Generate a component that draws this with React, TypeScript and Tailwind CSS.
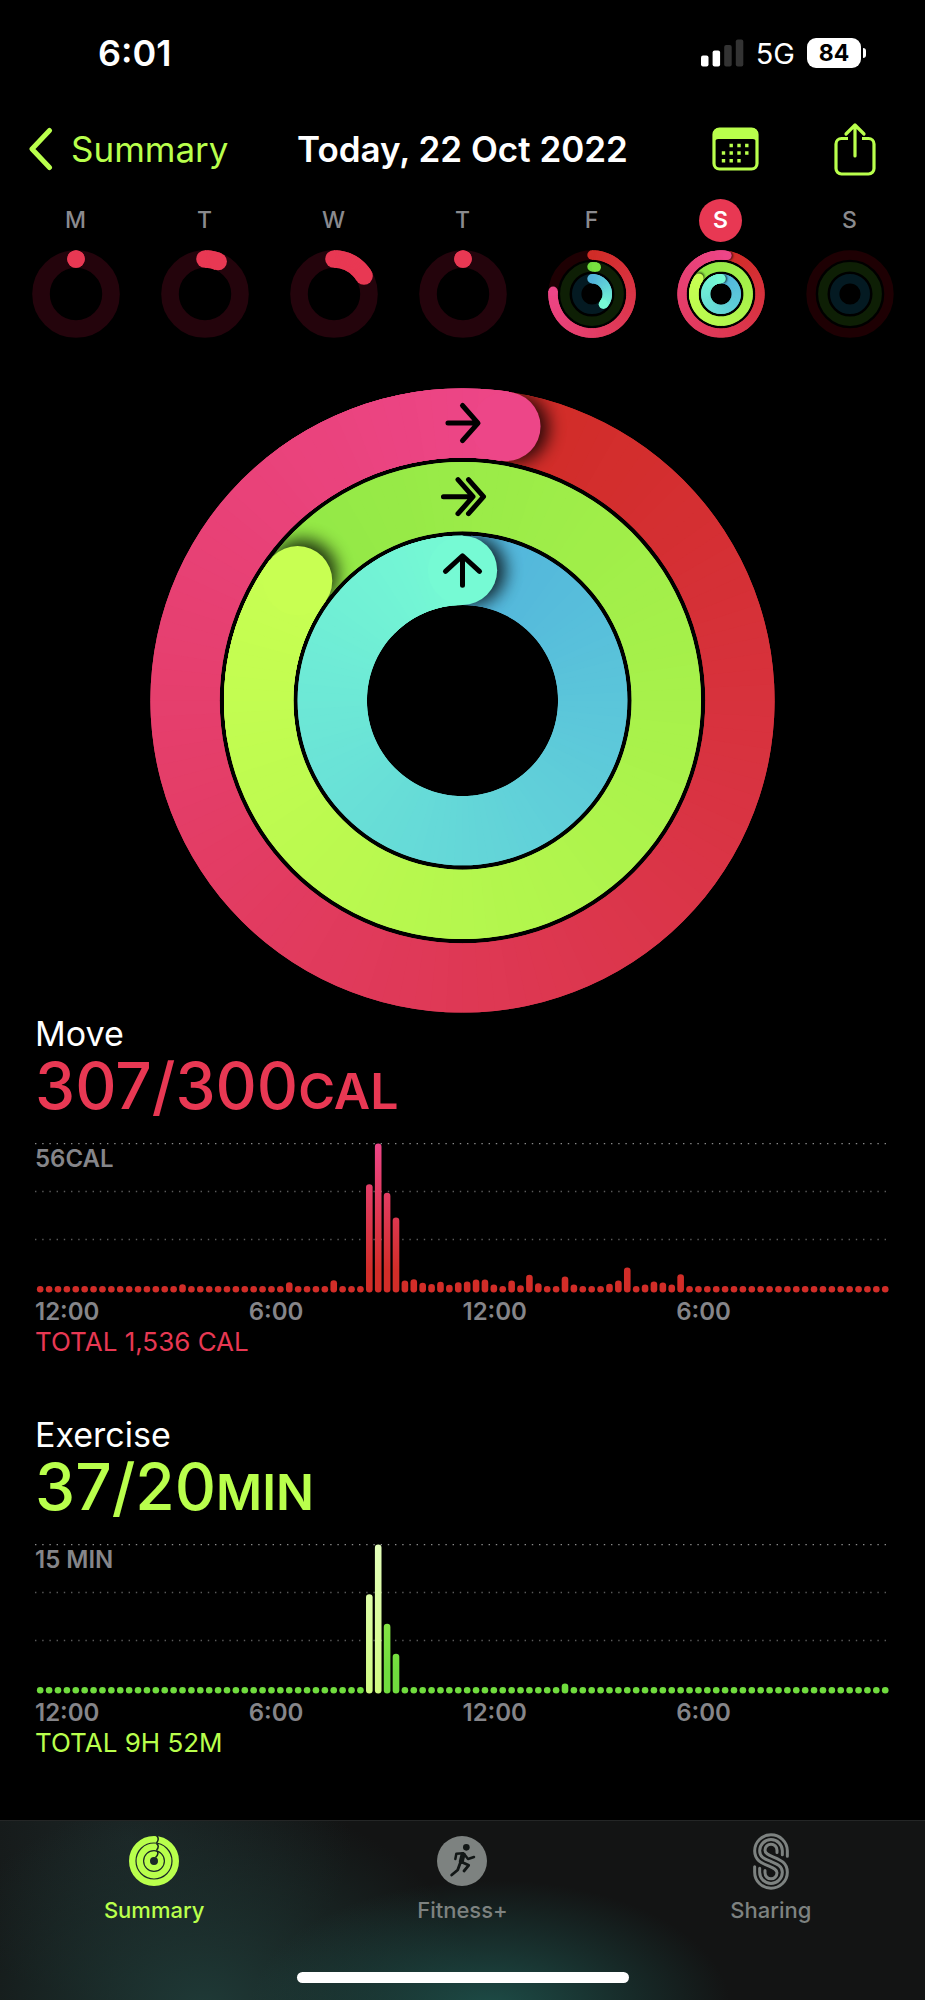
import type { ReactNode } from "react";

type Stop = [number, number, number];

interface RingSpec {
  id: string;
  radius: number;
  width: number;
  start: number;
  end: number;
  from: Stop;
  to: Stop;
  track?: string;
  shadow?: boolean;
}

const RED_FROM: Stop = [209, 44, 39];
const RED_TO: Stop = [237, 70, 136];
const GREEN_FROM: Stop = [146, 232, 70];
const GREEN_TO: Stop = [200, 255, 82];
const BLUE_FROM: Stop = [82, 180, 220];
const BLUE_TO: Stop = [118, 250, 212];
const PINK: Stop = [232, 56, 83];

function point(radius: number, angle: number) {
  const rad = ((angle - 90) * Math.PI) / 180;
  return [radius * Math.cos(rad), radius * Math.sin(rad)];
}

function arc(radius: number, a: number, b: number) {
  const [x1, y1] = point(radius, a);
  const [x2, y2] = point(radius, b);
  return `M${x1} ${y1}A${radius} ${radius} 0 0 1 ${x2} ${y2}`;
}

function mix(from: Stop, to: Stop, t: number) {
  const c = from.map((v, i) => Math.round(v + (to[i] - v) * t));
  return `rgb(${c[0]},${c[1]},${c[2]})`;
}

function donut(outer: number, inner: number) {
  const circle = (r: number) => `M${-r} 0A${r} ${r} 0 1 1 ${r} 0A${r} ${r} 0 1 1 ${-r} 0Z`;
  return circle(outer) + circle(inner);
}

function Ring({ id, radius, width, start, end, from, to, track, shadow }: RingSpec) {
  const span = end - start;
  const step = 3;
  // each segment runs on under the next one, so no seam shows between them
  const segments = [];
  for (let a = start; a < end; a += step) {
    segments.push({ a, b: Math.min(a + step * 2, end), color: mix(from, to, (a - start) / (span || 1)) });
  }
  const draw = (list: typeof segments) =>
    list.map((s) => <path key={s.a} d={arc(radius, s.a, s.b)} stroke={s.color} strokeWidth={width} fill="none" />);
  const [sx, sy] = point(radius, start);
  const [ex, ey] = point(radius, end);
  const [hx, hy] = point(radius, end + (width * 7) / radius);

  return (
    <g>
      {track && <circle r={radius} fill="none" stroke={track} strokeWidth={width} />}
      {!shadow && <circle cx={sx} cy={sy} r={width / 2} fill={mix(from, to, 0)} />}
      {draw(segments)}
      {shadow && (
        <>
          <clipPath id={`${id}-clip`}>
            <path d={donut(radius + width / 2, radius - width / 2)} clipRule="evenodd" />
          </clipPath>
          <filter id={`${id}-blur`} x="-50%" y="-50%" width="200%" height="200%">
            <feGaussianBlur stdDeviation={width / 8} />
          </filter>
          <g clipPath={`url(#${id}-clip)`}>
            <circle cx={hx} cy={hy} r={width / 2} fill="#000" opacity="0.8" filter={`url(#${id}-blur)`} />
          </g>
          {draw(segments.slice(-16))}
        </>
      )}
      <circle cx={ex} cy={ey} r={width / 2} fill={mix(from, to, 1)} />
    </g>
  );
}

function Track({ radius, width, color }: { radius: number; width: number; color: string }) {
  return <circle r={radius} fill="none" stroke={color} strokeWidth={width} />;
}

function MoveOnly({ id, end }: { id: string; end: number }) {
  return <Ring id={id} radius={35} width={17.6} start={0} end={end} from={PINK} to={PINK} track="#24040c" />;
}

const days: { label: string; name: string; active?: boolean; rings: ReactNode }[] = [
  { label: "M", name: "Monday", rings: <MoveOnly id="mon" end={0} /> },
  { label: "T", name: "Tuesday", rings: <MoveOnly id="tue" end={22} /> },
  { label: "W", name: "Wednesday", rings: <MoveOnly id="wed" end={59} /> },
  { label: "T", name: "Thursday", rings: <MoveOnly id="thu" end={0} /> },
  {
    label: "F",
    name: "Friday",
    rings: (
      <>
        <Ring id="fri-m" radius={39} width={9.4} start={0} end={274} from={RED_FROM} to={RED_TO} track="#1e0003" />
        <Ring id="fri-e" radius={27.2} width={9.4} start={0} end={9} from={[114, 220, 62]} to={[120, 224, 64]} track="#0e1f05" />
        <Ring id="fri-s" radius={15.3} width={9.4} start={0} end={132} from={BLUE_FROM} to={BLUE_TO} track="#041a22" />
      </>
    ),
  },
  {
    label: "S",
    name: "Saturday",
    active: true,
    rings: (
      <>
        <Ring id="sat-m" radius={39} width={9.2} start={9} end={369} from={RED_FROM} to={RED_TO} shadow />
        <Ring id="sat-e" radius={27.2} width={9.2} start={306} end={666} from={GREEN_FROM} to={GREEN_TO} shadow />
        <Ring id="sat-s" radius={15.3} width={9.2} start={0} end={361} from={BLUE_FROM} to={BLUE_TO} shadow />
      </>
    ),
  },
  {
    label: "S",
    name: "Sunday",
    rings: (
      <>
        <Track radius={39} width={9.4} color="#1e0003" />
        <Track radius={27.2} width={9.4} color="#0e1f05" />
        <Track radius={15.3} width={9.4} color="#041a22" />
      </>
    ),
  },
];

function StatusBar() {
  return (
    <div className="flex h-26 items-center justify-between pl-[98px] pr-[59px] pt-0.5 text-white">
      <span className="text-[36px] font-semibold leading-none">6:01</span>
      <div className="flex items-center gap-3">
        <svg width="43" height="28" viewBox="0 0 43 28" aria-hidden="true">
          <rect x="0" y="16.5" width="7.5" height="11" rx="2" fill="#fff" />
          <rect x="11.6" y="11.5" width="7.5" height="16" rx="2" fill="#fff" />
          <rect x="23.2" y="6" width="7.5" height="21.5" rx="2" fill="#333" />
          <rect x="34.8" y="0.5" width="7.5" height="27" rx="2" fill="#333" />
        </svg>
        <span className="text-[29px] leading-none">5G</span>
        <div className="flex items-center gap-0.5">
          <span className="flex h-[30px] w-[54px] items-center justify-center rounded-[9px] bg-white text-[23px] font-bold leading-none text-black">
            84
          </span>
          <span className="h-2.5 w-[3px] rounded-r-full bg-white" />
        </div>
      </div>
    </div>
  );
}

function Header() {
  return (
    <header className="grid h-[90px] grid-cols-[1fr_auto_1fr] items-center px-7">
      <a href="#summary" className="flex items-center gap-[18px] text-[35px] leading-none text-[#b9ff4c]">
        <svg width="25" height="44" viewBox="0 0 25 44" fill="none" aria-hidden="true">
          <path d="M21.500 3.500 4 22l17.500 18.500" stroke="currentColor" strokeWidth="5" strokeLinecap="round" strokeLinejoin="round" />
        </svg>
        Summary
      </a>
      <h1 className="whitespace-nowrap text-[35px] font-semibold leading-none text-white">Today, 22 Oct 2022</h1>
      <div className="flex items-center justify-end gap-[75px] pr-[21px] text-[#b9ff4c]">
        <button type="button" aria-label="Calendar">
          <svg width="47" height="44" viewBox="0 0 47 44" fill="none">
            <rect x="2" y="2" width="43" height="40" rx="5.500" stroke="currentColor" strokeWidth="3.200" />
            <path d="M1 12V7a6 6 0 0 1 6-6h33a6 6 0 0 1 6 6v5l-2 1.500a4 4 0 0 0-3-1.500H6a4 4 0 0 0-3 1.500Z" fill="currentColor" />
            <path
              d="M17.500 18.500h3.400m4.400 0h3.400m4.400 0h3.400M9.800 26h3.400m4.300 0h3.400m4.400 0h3.400m4.400 0h3.400M9.800 33.800h3.400m4.300 0h3.400m4.400 0h3.400"
              stroke="currentColor"
              strokeWidth="3.400"
            />
          </svg>
        </button>
        <button type="button" aria-label="Share">
          <svg width="42" height="54" viewBox="0 0 42 54" fill="none" stroke="currentColor" strokeWidth="3.200">
            <path d="M14 16.500H7.500a5.500 5.500 0 0 0-5.500 5.500v24.500a5.500 5.500 0 0 0 5.500 5.500h27a5.500 5.500 0 0 0 5.500-5.500V22a5.500 5.500 0 0 0-5.500-5.500H28" />
            <path d="M21 34V3.500M12 12l9-9 9 9" strokeLinecap="round" strokeLinejoin="round" />
          </svg>
        </button>
      </div>
    </header>
  );
}

function WeekStrip() {
  return (
    <div className="mt-[5px] grid grid-cols-7 px-[11px]">
      {days.map((day) => (
        <button key={day.name} type="button" aria-label={day.name} className="flex flex-col items-center gap-2">
          <span
            className={
              day.active
                ? "flex size-[43px] items-center justify-center rounded-full bg-[#e83853] text-[23px] font-semibold text-white"
                : "flex size-[43px] items-center justify-center text-[23px] font-medium text-[#8a8a8e]"
            }
          >
            {day.label}
          </span>
          <svg width="88" height="88" viewBox="-44 -44 88 88" aria-hidden="true">
            {day.rings}
          </svg>
        </button>
      ))}
    </div>
  );
}

function BigRings() {
  return (
    <svg className="mx-auto mt-[50px] w-full max-w-[625px]" viewBox="-312 -312 624 624" role="img" aria-label="Activity rings">
      <Ring id="move" radius={277} width={69.2} start={9} end={369} from={RED_FROM} to={RED_TO} shadow />
      <Ring id="exercise" radius={203.5} width={69.2} start={306} end={666} from={GREEN_FROM} to={GREEN_TO} shadow />
      <Ring id="stand" radius={130} width={69.2} start={0} end={360} from={BLUE_FROM} to={BLUE_TO} shadow />
      <g fill="none" stroke="#000" strokeWidth="5" strokeLinecap="round" strokeLinejoin="round">
        <path d="M-14.500-277H15M0-294.500 15.500-277 0-259.500" />
        <path d="M-19-203.500H10M-4.500-220.500 10.500-203.500-4.500-186.500M6-220.500 21-203.500 6-186.500" />
        <path d="M0-115V-144M-17-129 0-144.500 17-129" />
      </g>
    </svg>
  );
}

const SLOTS = 96;
const MIN_BAR = 6.6;

const moveBars: Record<number, number> = {
  16: 8.3, 28: 10.3, 33: 12.3, 37: 108.3, 38: 149, 39: 99.7, 40: 75, 41: 12, 42: 13.3, 43: 9.7, 44: 8.5,
  45: 10.7, 46: 7.7, 47: 10.3, 48: 11, 49: 13, 50: 13, 51: 8, 53: 12, 54: 7.3, 55: 17.7, 56: 9.3, 59: 16,
  60: 8, 64: 8.7, 65: 12, 66: 25, 68: 8, 69: 11, 70: 10, 71: 8, 72: 18.3,
};

const exerciseBars: Record<number, number> = { 37: 99.3, 38: 149, 39: 69.7, 40: 39.7, 59: 10 };

interface ChartProps {
  id: string;
  bars: Record<number, number>;
  low: string;
  high: string;
  bright?: number[];
}

function Chart({ id, bars, low, high, bright = [] }: ChartProps) {
  return (
    <svg className="block w-full" viewBox="0 0 855 150" aria-hidden="true">
      <defs>
        <linearGradient id={id} gradientUnits="userSpaceOnUse" x1="0" y1="150" x2="0" y2="0">
          <stop offset="0" stopColor={low} />
          <stop offset="0.150" stopColor={low} />
          <stop offset="1" stopColor={high} />
        </linearGradient>
        <linearGradient id={`${id}-bright`} gradientUnits="userSpaceOnUse" x1="0" y1="150" x2="0" y2="0">
          <stop offset="0" stopColor="#d0fa82" />
          <stop offset="1" stopColor="#e4ffbb" />
        </linearGradient>
      </defs>
      {[0.5, 48.5, 96.5].map((y) => (
        <line key={y} x1="0" x2="853" y1={y} y2={y} stroke={y < 1 ? "#8a8a8a" : "#5a5a5a"} strokeWidth="1.400" strokeDasharray="1.400 5.800" />
      ))}
      {Array.from({ length: SLOTS }, (_, i) => {
        const h = bars[i] ?? MIN_BAR;
        return (
          <rect
            key={i}
            x={1.9 + i * 8.895}
            y={149.5 - h}
            width={MIN_BAR}
            height={h}
            rx={MIN_BAR / 2}
            fill={bright.includes(i) ? `url(#${id}-bright)` : `url(#${id})`}
          />
        );
      })}
    </svg>
  );
}

interface MetricProps {
  title: string;
  value: string;
  unit: string;
  peak: string;
  total: string;
  colorClass: string;
  children: ReactNode;
}

function Metric({ title, value, unit, peak, total, colorClass, children }: MetricProps) {
  return (
    <section className="px-[35px]">
      <h2 className="text-[34px] leading-10 text-white">{title}</h2>
      <p className={`flex items-baseline text-[64px] font-medium leading-16 ${colorClass}`}>
        {value}
        <span className="text-[50px] font-semibold leading-none">{unit}</span>
      </p>
      <div className="relative mt-[25px]">
        {children}
        <span className="absolute left-0 top-1 text-[24px] font-semibold leading-6 text-[#858589]">{peak}</span>
      </div>
      <div className="mt-1 grid grid-cols-4 text-[24px] font-semibold leading-[30px] text-[#858589]">
        <span>12:00</span>
        <span>6:00</span>
        <span>12:00</span>
        <span>6:00</span>
      </div>
      <p className={`text-[26px] leading-[30px] ${colorClass}`}>{total}</p>
    </section>
  );
}

function SummaryIcon() {
  return (
    <svg width="50" height="50" viewBox="-25 -25 50 50" fill="none" aria-hidden="true">
      <circle r="21.800" stroke="currentColor" strokeWidth="6.400" />
      <circle r="14.200" stroke="currentColor" strokeWidth="6.400" />
      <circle r="6.900" stroke="currentColor" strokeWidth="5.800" />
      <path
        d="M2.500-25.500C4.800-23.500 4.800-20.500 2.500-18M2.500-17.500C4.800-16 4.800-13 2.500-11M2.500-10.500C4.600-9 4.400-6 1.500-3.500"
        stroke="#14201f"
        strokeWidth="1.500"
      />
    </svg>
  );
}

function FitnessIcon() {
  return (
    <svg width="50" height="50" viewBox="110 48 150 150" fill="none" aria-hidden="true">
      <circle cx="185" cy="123" r="75" fill="currentColor" />
      <circle cx="198" cy="82" r="10" fill="#121716" />
      <g stroke="#121716" strokeLinecap="round" strokeLinejoin="round">
        <path d="M188 104 183 124" strokeWidth="15" />
        <path d="M188 100 168 101 165 117M192 103 203 117 221 111" strokeWidth="7.500" />
        <path d="M184 126 205 136 191 153M180 128 172 150 154 165" strokeWidth="8.500" />
      </g>
    </svg>
  );
}

function SharingIcon() {
  return (
    <svg width="36" height="57" viewBox="126 39 108 170" fill="none" stroke="currentColor" strokeWidth="9" strokeLinecap="round" aria-hidden="true">
      <path d="M229 108V92A49 48 0 0 0 131 92C131 122 155 130 174 138 190 145 198 149 198 158A18 18 0 0 1 162 158V151" />
      <path d="M214 104V92A34 34 0 0 0 146 92C146 112 163 117 180 124 197 131 214 137 214 156A34 34 0 0 1 146 156V144" />
      <path d="M131 140V156A49 48 0 0 0 229 156C229 126 205 118 186 110 170 103 162 99 162 90A18 18 0 0 1 198 90V97" />
    </svg>
  );
}

function TabBar() {
  return (
    <footer className="mt-auto flex h-[180px] flex-col justify-between border-t border-[#242626] bg-[#131414] bg-[radial-gradient(ellipse_26%_72%_at_53%_105%,#1d4c47,transparent),radial-gradient(ellipse_30%_120%_at_22%_105%,#1f3a37,transparent),radial-gradient(ellipse_24%_90%_at_14%_10%,#1b2525,transparent)]">
      <nav className="grid grid-cols-3 pt-[11px] text-[22px] font-medium leading-6 text-[#7d8280]">
        <a href="#summary" aria-current="page" className="flex flex-col items-center gap-2 text-[#b9ff4c]">
          <span className="flex h-[58px] items-center">
            <SummaryIcon />
          </span>
          Summary
        </a>
        <a href="#fitness" className="flex flex-col items-center gap-2">
          <span className="flex h-[58px] items-center">
            <FitnessIcon />
          </span>
          Fitness+
        </a>
        <a href="#sharing" className="flex flex-col items-center gap-2">
          <span className="flex h-[58px] items-center">
            <SharingIcon />
          </span>
          Sharing
        </a>
      </nav>
      <div className="mx-auto mb-[17px] h-[11px] w-[332px] rounded-full bg-white" />
    </footer>
  );
}

export default function App() {
  return (
    <div className="flex min-h-screen flex-col bg-black font-['Inter','Liberation_Sans',sans-serif]">
      <StatusBar />
      <Header />
      <main>
        <WeekStrip />
        <BigRings />
        <div className="mt-px flex flex-col gap-[58px]">
          <Metric title="Move" value="307/300" unit="CAL" peak="56CAL" total="TOTAL 1,536 CAL" colorClass="text-[#e83853]">
            <Chart id="move-bars" bars={moveBars} low="#d22d28" high="#ed4688" />
          </Metric>
          <Metric title="Exercise" value="37/20" unit="MIN" peak="15 MIN" total="TOTAL 9H 52M" colorClass="text-[#b9ff4c]">
            <Chart id="exercise-bars" bars={exerciseBars} low="#70dc3e" high="#a4f04c" bright={[37, 38]} />
          </Metric>
        </div>
      </main>
      <TabBar />
    </div>
  );
}
